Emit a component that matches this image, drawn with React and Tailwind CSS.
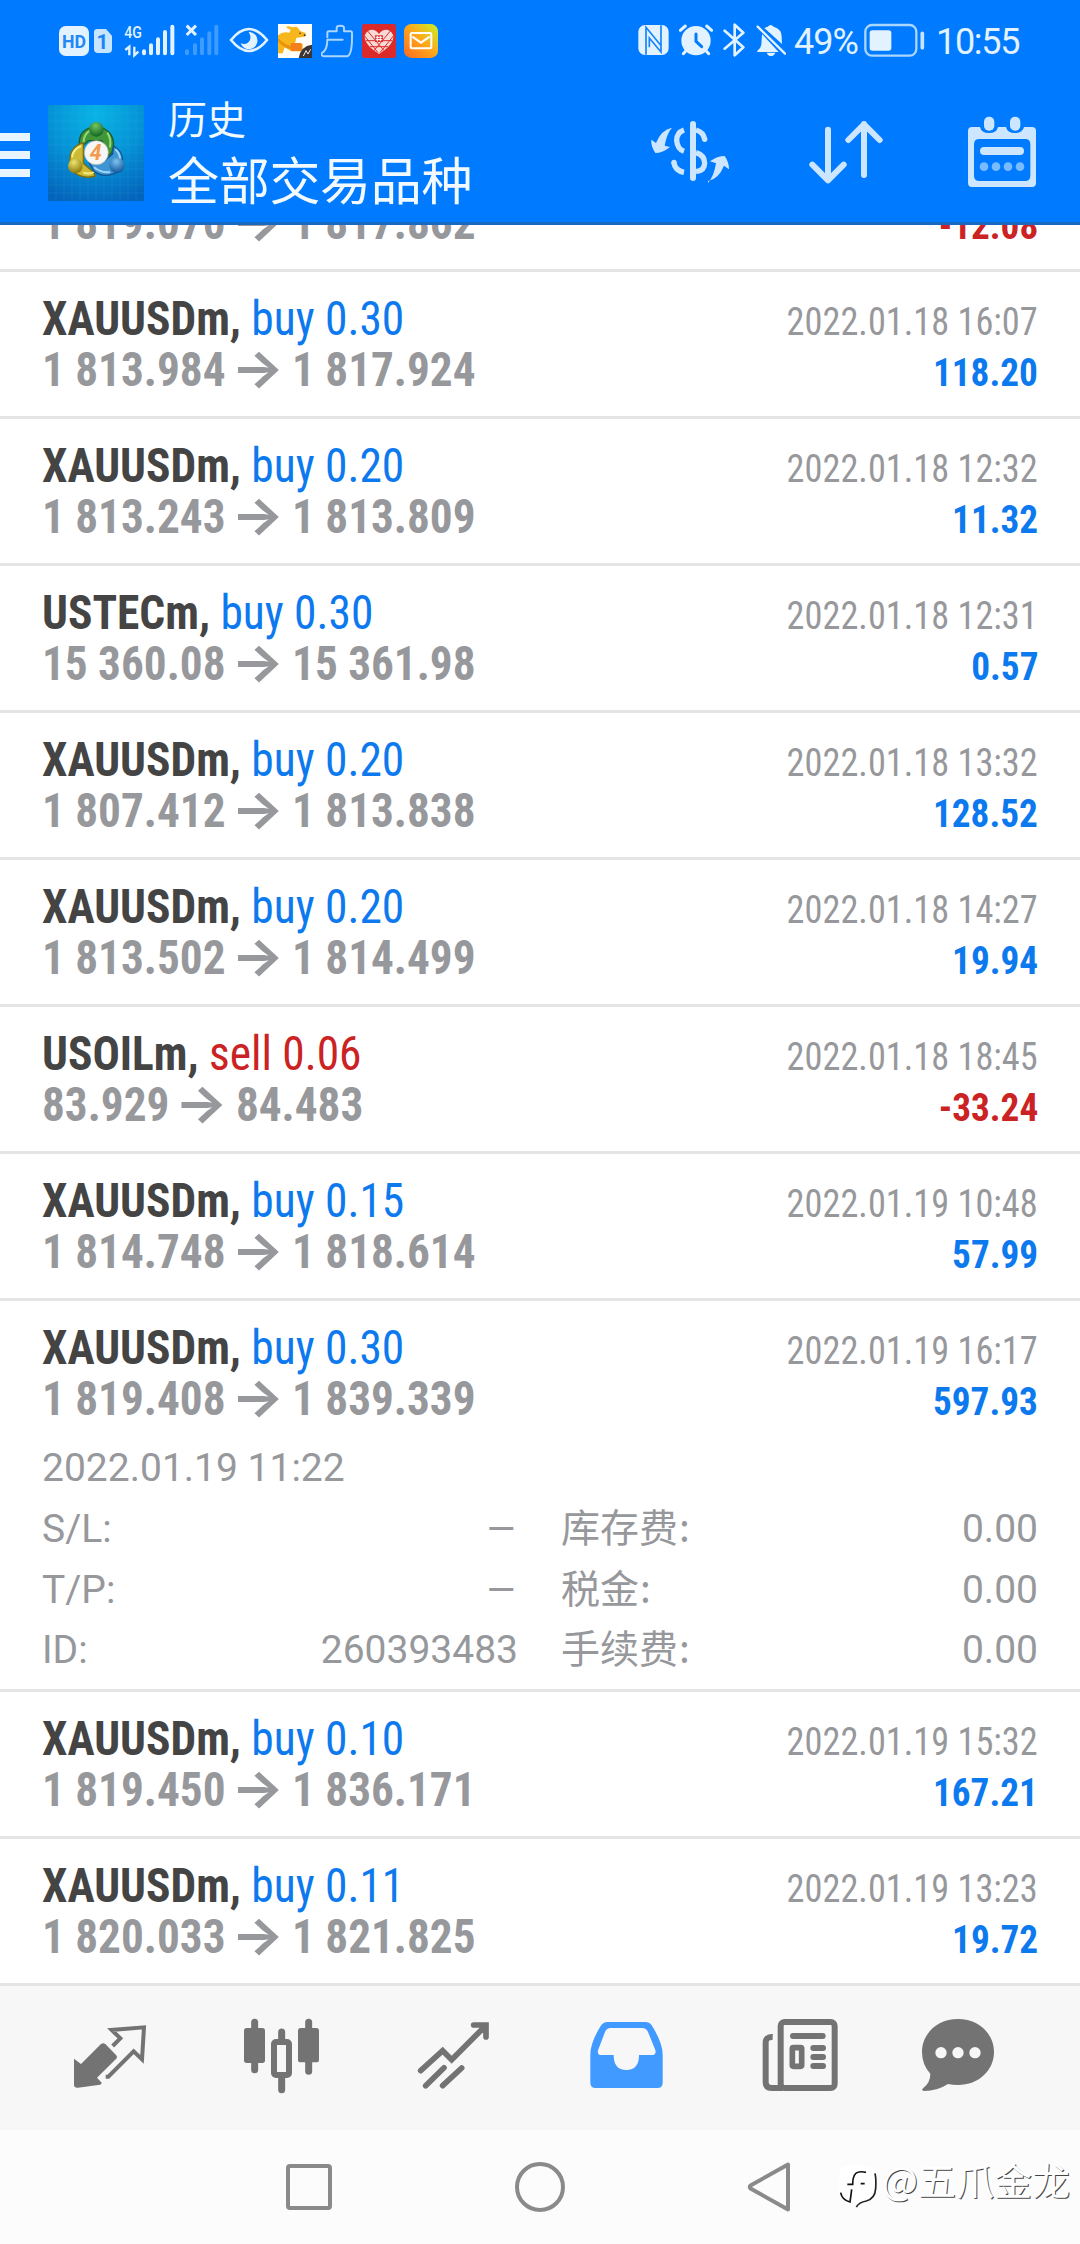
/* ===========================
   DATA
=========================== */

const deals = [
  { symbol: "XAUUSDm", side: "buy", lots: "0.30", open: "1 813.984", close: "1 817.924", time: "2022.01.18 16:07", profit: "118.20" },
  { symbol: "XAUUSDm", side: "buy", lots: "0.20", open: "1 813.243", close: "1 813.809", time: "2022.01.18 12:32", profit: "11.32" },
  { symbol: "USTECm", side: "buy", lots: "0.30", open: "15 360.08", close: "15 361.98", time: "2022.01.18 12:31", profit: "0.57" },
  { symbol: "XAUUSDm", side: "buy", lots: "0.20", open: "1 807.412", close: "1 813.838", time: "2022.01.18 13:32", profit: "128.52" },
  { symbol: "XAUUSDm", side: "buy", lots: "0.20", open: "1 813.502", close: "1 814.499", time: "2022.01.18 14:27", profit: "19.94" },
  { symbol: "USOILm", side: "sell", lots: "0.06", open: "83.929", close: "84.483", time: "2022.01.18 18:45", profit: "-33.24" },
  { symbol: "XAUUSDm", side: "buy", lots: "0.15", open: "1 814.748", close: "1 818.614", time: "2022.01.19 10:48", profit: "57.99" },
  {
    symbol: "XAUUSDm", side: "buy", lots: "0.30", open: "1 819.408", close: "1 839.339", time: "2022.01.19 16:17", profit: "597.93",
    details: {
      opened: "2022.01.19 11:22",
      rows: [
        ["S/L:", "–", "库存费", "0.00"],
        ["T/P:", "–", "税金", "0.00"],
        ["ID:", "260393483", "手续费", "0.00"]
      ]
    }
  },
  { symbol: "XAUUSDm", side: "buy", lots: "0.10", open: "1 819.450", close: "1 836.171", time: "2022.01.19 15:32", profit: "167.21" },
  { symbol: "XAUUSDm", side: "buy", lots: "0.11", open: "1 820.033", close: "1 821.825", time: "2022.01.19 13:23", profit: "19.72" }
];

/* ===========================
   STATUS BAR
=========================== */

function StatusBar() {

  return (

    <div className="flex h-[80px] items-start pt-[22px] pl-[59px] text-[#e2f2ff]">

      {/* HD + SIM badge */}

      <svg className="h-[36px] w-[30px]" viewBox="57 36 90 108">
        <rect x="57" y="48" width="90" height="90" rx="20" fill="#e2f2ff" />
        <text x="102" y="114" textAnchor="middle" textLength="72" lengthAdjust="spacingAndGlyphs" fontSize="56" fontWeight="700" fontFamily="Roboto" fill="#2387f5">HD</text>
      </svg>

      <svg className="ml-[5px] h-[36px] w-[18px]" viewBox="162 36 54 108">
        <path d="M172 57h26l18 20v40q0 12-12 12h-30q-12 0-12-12V67q0-10 10-10z" fill="#c8e5ff" />
        <text x="187" y="117" textAnchor="middle" fontSize="62" fontWeight="700" fontFamily="Roboto" fill="#1c84f5">1</text>
      </svg>

      {/* 4G signal */}

      <svg className="ml-[12px] h-[36px] w-[51px]" viewBox="252 36 153 108">
        <text x="253" y="84" textLength="53" lengthAdjust="spacingAndGlyphs" fontSize="52" fontWeight="500" fontFamily="Roboto" fill="#e2f2ff">4G</text>
        <path d="M256 120l12-10v26M283 110v26l12-11" stroke="#e2f2ff" strokeWidth="7" fill="none" />
        <path d="M312 124v6M333 106v24M354 88v42M375 66v64M397 50v80" stroke="#e2f2ff" strokeWidth="12" strokeLinecap="round" />
      </svg>

      {/* No signal on second SIM */}

      <svg className="ml-[10px] h-[36px] w-[34px]" viewBox="435 36 102 108">
        <path d="M441 124v6M465 106v24M486 88v42M508 70v60M529 50v80" stroke="#3f9cff" strokeWidth="12" strokeLinecap="round" />
        <path d="M440 47l28 28M468 47l-28 28" stroke="#e2f2ff" strokeWidth="9" />
      </svg>

      {/* Eye comfort */}

      <svg className="ml-[10px] h-[36px] w-[40px]" viewBox="567 36 120 108">
        <path d="M573 90Q627 24 681 90Q627 156 573 90z" fill="none" stroke="#e2f2ff" strokeWidth="8" strokeLinejoin="round" />
        <path d="M630 66a26 26 0 1 1-28 34q20 6 28-10q4-12-4-23z" fill="#e2f2ff" />
      </svg>

      {/* Kangaroo app */}

      <svg className="ml-[9px] h-[36px] w-[34px]" viewBox="714 36 102 108">
        <rect x="714" y="42" width="102" height="102" fill="#fffdf5" />
        <path d="M714 76q14-12 34-8l4-8-14-8q6-6 18 0l14-2 12 14 14 4q4 8-4 12l-24 4q0 14-6 18h26v22h-34l-20-12-6 18h-14z" fill="#f7b61c" />
        <path d="M714 84q20 22 46 26l-2 8q-28-2-44-24z" fill="#e9920a" />
        <rect x="752" y="99" width="33" height="24" rx="3" fill="#f2801d" />
        <circle cx="780" cy="70" r="2.5" fill="#433" />
        <circle cx="794" cy="76" r="3" fill="#433" />
        <path d="M776 144q6-36 40-40v40z" fill="#3c3536" />
        <path d="M790 138l8-16 6 10 8-14" stroke="#eee" strokeWidth="3" fill="none" />
      </svg>

      {/* Cleaner */}

      <svg className="ml-[9px] h-[36px] w-[33px]" viewBox="843 36 99 108">
        <path d="M862 82V68q0-4 4-4h24V53q0-6 11-6t11 6v11h21q3 0 3 5v14q0 50-14 56h-70q-10-2-6-10 16-10 16-40h46" fill="none" stroke="#a9d5ff" strokeWidth="6" strokeLinejoin="round" strokeLinecap="round" />
      </svg>

      {/* Heart app */}

      <svg className="ml-[8px] h-[36px] w-[34px]" viewBox="966 36 102 108">
        <rect x="966" y="42" width="102" height="102" rx="8" fill="#dc2a2b" />
        <path d="M1017 72q-14-18-32-10-14 10-10 26 6 22 42 44 36-22 42-44 4-16-10-26-18-8-32 10z" fill="#f8d9d4" />
        <path d="M982 62l50 60M974 78l40 50M1052 62l-50 60M1060 78l-40 50M978 92h28M1028 92h28M990 110h54" stroke="#dc2a2b" strokeWidth="3" />
        <rect x="1005" y="76" width="24" height="20" fill="#dc2a2b" />
        <path d="M1012 78v16M1021 78v16M1007 82h20M1007 89h20" stroke="#fff" strokeWidth="3" />
      </svg>

      {/* Mail app */}

      <svg className="ml-[8px] h-[36px] w-[34px]" viewBox="1092 36 102 108">
        <defs>
          <linearGradient id="mail" x1="0" y1="1" x2="1" y2="0">
            <stop offset="0" stopColor="#ff6a1f" />
            <stop offset="0.5" stopColor="#ffa51a" />
            <stop offset="1" stopColor="#c6f228" />
          </linearGradient>
        </defs>
        <rect x="1092" y="42" width="102" height="102" rx="22" fill="url(#mail)" />
        <rect x="1112" y="69" width="62" height="46" rx="4" fill="none" stroke="#fff" strokeWidth="6" />
        <path d="M1117 80l26 18 26-18" fill="none" stroke="#fff" strokeWidth="6" />
      </svg>

      {/* NFC */}

      <svg className="ml-[200px] h-[36px] w-[31px]" viewBox="54 36 93 108">
        <rect x="55" y="45" width="91" height="90" rx="20" fill="#e2f2ff" />
        <path d="M78 134V52l44 54M123 46v80L88 84v28" fill="none" stroke="#1583fb" strokeWidth="5" />
      </svg>

      {/* Alarm */}

      <svg className="ml-[10px] h-[36px] w-[34px]" viewBox="177 36 102 108">
        <circle cx="228" cy="92" r="44" fill="#e2f2ff" />
        <path d="M181 61l15-13M275 61l-15-13M198 122l-8 9M258 122l8 9" stroke="#e2f2ff" strokeWidth="9" strokeLinecap="round" />
        <path d="M228 72v22l17 16" fill="none" stroke="#007aff" strokeWidth="9" strokeLinecap="round" />
      </svg>

      {/* Bluetooth */}

      <svg className="ml-[10px] h-[36px] w-[22px]" viewBox="309 36 66 108">
        <path d="M314 62l56 50-26 24V44l26 24-56 48" fill="none" stroke="#e2f2ff" strokeWidth="8" strokeLinejoin="round" strokeLinecap="round" />
      </svg>

      {/* Muted bell */}

      <svg className="ml-[11px] h-[36px] w-[30px]" viewBox="408 36 90 108">
        <path d="M412 122q10-6 12-18l2-32 50 54h-64zM433 54l10-4q9-10 18 0 26 8 24 34l1 18zM440 128h26q-4 10-13 10t-13-10z" fill="#e2f2ff" />
        <path d="M413 50l82 81" stroke="#e2f2ff" strokeWidth="7" strokeLinecap="round" />
      </svg>

      <span className="ml-[8px] w-[69px] font-[Roboto] text-[36px] leading-[40px] tracking-[-1px] whitespace-nowrap">49%</span>

      {/* Battery */}

      <svg className="ml-[1px] h-[36px] w-[61px]" viewBox="732 36 183 108">
        <rect x="736" y="45" width="153" height="92" rx="20" fill="none" stroke="#a9d5ff" strokeWidth="7" />
        <rect x="749" y="61" width="65" height="61" rx="8" fill="#e2f2ff" />
        <path d="M907 70v43" stroke="#c8e5ff" strokeWidth="11" strokeLinecap="round" />
      </svg>

      <span className="ml-[11px] font-[Roboto] text-[36px] leading-[40px] tracking-[-1.3px] whitespace-nowrap">10:55</span>

    </div>

  );

}

/* ===========================
   HEADER
=========================== */

function AppLogo() {

  return (

    <svg className="ml-[18px] h-[96px] w-[96px]" viewBox="144 75 288 288">
      <defs>
        <radialGradient id="sky" cx="0.5" cy="0.1" r="0.95">
          <stop offset="0" stopColor="#08b4e6" />
          <stop offset="0.5" stopColor="#0593d6" />
          <stop offset="1" stopColor="#0464bb" />
        </radialGradient>
        <radialGradient id="green" cx="0.45" cy="0.25" r="0.8">
          <stop offset="0" stopColor="#6fc460" />
          <stop offset="1" stopColor="#0d5f20" />
        </radialGradient>
        <radialGradient id="gold" cx="0.4" cy="0.25" r="0.8">
          <stop offset="0" stopColor="#efe36c" />
          <stop offset="1" stopColor="#857208" />
        </radialGradient>
        <radialGradient id="blue" cx="0.45" cy="0.25" r="0.8">
          <stop offset="0" stopColor="#7cc2f0" />
          <stop offset="1" stopColor="#0a4f94" />
        </radialGradient>
      </defs>
      <rect x="144" y="75" width="288" height="288" fill="url(#sky)" />
      <path d="M168 75v288M192 75v288M216 75v288M240 75v288M264 75v288M288 75v288M312 75v288M336 75v288M360 75v288M384 75v288M408 75v288M144 99h288M144 123h288M144 147h288M144 171h288M144 195h288M144 219h288M144 243h288M144 267h288M144 291h288M144 315h288M144 339h288" stroke="#5fc4ee" strokeOpacity="0.18" strokeWidth="2" />
      <path d="M238 196q-4-50 50-56 54 6 53 60-4 20-14 26l-22-44h-40l-10 10z" fill="#3f973a" stroke="#1b5f27" strokeWidth="4" />
      <path d="M250 188q2-26 20-36M322 158q12 18 8 44" stroke="#98d77c" strokeWidth="6" fill="none" />
      <path d="M250 188q-44 14-40 58l16 34q30 18 60 8l-6-12-30-26z" fill="#cdbb33" stroke="#7c6e12" strokeWidth="4" />
      <path d="M216 232q2-24 28-34M250 278q18 6 32-2" stroke="#f5ec88" strokeWidth="6" fill="none" />
      <path d="M340 198q30 14 28 50l-14 26q-38 24-72 0l-14-26 44-4 26-22z" fill="#3d95d4" stroke="#0f538f" strokeWidth="4" />
      <path d="M346 208q14 12 14 30M282 262q22 18 48 14" stroke="#a0d7f7" strokeWidth="6" fill="none" />
      <circle cx="289" cy="148" r="22" fill="url(#green)" />
      <circle cx="226" cy="258" r="22" fill="url(#gold)" />
      <circle cx="351" cy="256" r="23" fill="url(#blue)" />
      <circle cx="289" cy="218" r="36" fill="#f6f6f6" stroke="#b9b9a6" strokeWidth="2" />
      <text x="287" y="241" textAnchor="middle" fontSize="64" fontWeight="700" fontStyle="italic" fontFamily="Roboto" fill="#f49a4e">4</text>
    </svg>

  );

}

function Header() {

  return (

    <div className="flex h-[145px] items-start border-b-[3px] border-[#1a69c0]">

      {/* Menu */}

      <div className="mt-[53px] flex w-[30px] flex-col gap-[10px]">
        <div className="h-[8px] bg-[#e6f5ff]"></div>
        <div className="h-[8px] bg-[#e6f5ff]"></div>
        <div className="h-[8px] bg-[#e6f5ff]"></div>
      </div>

      <div className="mt-[25px]">
        <AppLogo />
      </div>

      {/* Title */}

      <div className="ml-[24px] w-[483px] font-['Noto_Sans_CJK_SC',sans-serif] whitespace-nowrap text-[#f2faff]">
        <p className="mt-[13px] text-[39px] leading-[48px]">历史</p>
        <p className="mt-[4px] text-[51px] leading-[66px] tracking-[-0.3px]">全部交易品种</p>
      </div>

      {/* Currency */}

      <svg className="mt-[36px] h-[70px] w-[78px]" viewBox="93 78 234 210">
        <g fill="#cce6ff">
          <path d="M156 113q-32 6-48 46l-14-10q-2 20 12 40 22 0 44-18l-16-4q6-36 22-54z" />
          <path d="M264 273q32-6 48-46l15 11q0-22-13-40-22 0-44 16l18 6q-6 38-24 59z" />
        </g>
        <path d="M192 120q-22 8-22 31 2 26 22 33M161 216q4 26 31 31M228 120q22 6 26 28M228 188q26 8 26 31t-26 26" fill="none" stroke="#cce6ff" strokeWidth="16" />
        <circle cx="254" cy="148" r="8" fill="#cce6ff" />
        <circle cx="162" cy="217" r="8" fill="#cce6ff" />
        <path d="M219 102v162" stroke="#cce6ff" strokeWidth="18" strokeLinecap="round" />
      </svg>

      {/* Sort */}

      <svg className="ml-[80px] mt-[36px] h-[70px] w-[74px]" viewBox="567 78 222 210">
        <path d="M624 119v152M577 224l47 47 47-47M732 255V102M685 150l47-47 47 47" fill="none" stroke="#cce6ff" strokeWidth="18" strokeLinecap="round" strokeLinejoin="round" />
      </svg>

      {/* Calendar */}

      <svg className="ml-[84px] mt-[36px] h-[72px] w-[70px]" viewBox="1041 78 210 216">
        <path fillRule="evenodd" d="M1056 111h24q4 18 27 18t27-18h24q4 18 27 18t27-18h24q12 0 12 12v156q0 12-12 12h-180q-12 0-12-12V123q0-12 12-12zM1078 147q-16 0-16 16v94q0 16 16 16h137q16 0 16-16v-94q0-16-16-16z" fill="#cce6ff" />
        <rect x="1092" y="80" width="31" height="42" rx="15" fill="#cce6ff" />
        <rect x="1170" y="80" width="31" height="42" rx="15" fill="#cce6ff" />
        <path d="M1092 183h108" stroke="#cce6ff" strokeWidth="24" strokeLinecap="round" />
        <g fill="#7abaff">
          <circle cx="1092" cy="230" r="13" />
          <circle cx="1128" cy="230" r="13" />
          <circle cx="1164" cy="230" r="13" />
          <circle cx="1200" cy="230" r="13" />
        </g>
      </svg>

    </div>

  );

}

/* ===========================
   DEAL LIST
=========================== */

function PriceLine({ open, close, profit }) {

  const profitColor = profit.startsWith("-") ? "text-[#cb2224]" : "text-[#0d79ee]";

  return (

    <div className="flex h-[51px] items-baseline justify-between font-['Roboto_Condensed','Roboto'] leading-[51px] font-bold [font-stretch:75%]">
      <p className="flex origin-left scale-x-[0.942] items-baseline text-[48px] text-[#97989c]">
        <span>{open}</span>
        <span className="relative top-[1px] mr-[12px] ml-[9px] scale-x-[1.14] font-[Inter] text-[52px] leading-[40px] font-bold">→</span>
        <span>{close}</span>
      </p>
      <p className={`origin-right scale-x-[0.955] text-[39px] ${profitColor}`}>{profit}</p>
    </div>

  );

}

function DealDetails({ details }) {

  return (

    <div className="-mt-[7px] h-[251px] font-[Roboto] text-[39px] leading-[60.7px] text-[#97989c]">

      <p className="h-[57px]">{details.opened}</p>

      {details.rows.map(([label, value, feeLabel, fee]) => (

        <div key={label} className="flex h-[60.7px] items-baseline">
          <div className="flex w-[476px] justify-between">
            <span>{label}</span>
            <span className={value === "–" ? "origin-right scale-x-125" : ""}>{value}</span>
          </div>
          <div className="ml-[43px] flex flex-1 items-baseline justify-between">
            <span className="font-['Noto_Sans_CJK_SC',sans-serif]">{feeLabel}<span className="ml-[1px]">:</span></span>
            <span>{fee}</span>
          </div>
        </div>

      ))}

    </div>

  );

}

function Deal({ deal }) {

  const lotsColor = deal.side === "buy" ? "text-[#0d79ee]" : "text-[#cb2224]";

  return (

    <div className="border-b-[3px] border-[#e4e4e4] px-[42px]">

      <div className="h-[144px] pt-[21px]">

        <div className="flex h-[51px] items-baseline justify-between font-['Roboto_Condensed','Roboto'] leading-[51px] [font-stretch:75%]">
          <p className="origin-left scale-x-[0.946] text-[48px]">
            <span className="font-bold text-[#444444]">{deal.symbol},</span>{" "}
            <span className={lotsColor}>{deal.side} {deal.lots}</span>
          </p>
          <p className="origin-right scale-x-[0.931] text-[39px] text-[#97989c]">{deal.time}</p>
        </div>

        <PriceLine open={deal.open} close={deal.close} profit={deal.profit} />

      </div>

      {deal.details && <DealDetails details={deal.details} />}

    </div>

  );

}

/* ===========================
   BOTTOM TABS
=========================== */

function Tabs() {

  return (

    <div className="flex h-[144px] bg-[#f7f7f7] px-[24px]">

      {/* Quotes */}

      <svg className="h-[144px] w-[172px]" viewBox="-48 48 516 432">
        <path d="M102 266l21 16 60-60q7-5 13 0l32 33q6 6 0 12l-57 56 14 15q0 5-5 6l-66 9q-12 1-12-9z" fill="#737373" />
        <path d="M218 228l23-23-26-25 97-8-6 96-25-24-76 76h-8" fill="none" stroke="#737373" strokeWidth="12" />
      </svg>

      {/* Charts */}

      <svg className="h-[144px] w-[172px]" viewBox="468 48 516 432">
        <path d="M644 157v142M806 157v147M725 186v30M725 318v41" stroke="#737373" strokeWidth="21" strokeLinecap="round" />
        <rect x="612" y="174" width="63" height="105" rx="8" fill="#737373" />
        <rect x="774" y="174" width="63" height="103" rx="8" fill="#737373" />
        <rect x="702" y="216" width="45" height="99" rx="6" fill="#f7f7f7" stroke="#737373" strokeWidth="18" />
      </svg>

      {/* Trade */}

      <svg className="h-[144px] w-[172px]" viewBox="984 48 516 432">
        <path d="M1142 302l66-60 27 27 103-103M1301 165h37v36M1157 347l55-54M1208 347l57-53" fill="none" stroke="#737373" strokeWidth="17" strokeLinecap="round" />
      </svg>

      {/* History, active */}

      <svg className="h-[144px] w-[172px]" viewBox="-60 48 516 432">
        <path fillRule="evenodd" d="M142 156h114q12 0 19 10 33 52 33 88v84q0 16-16 16H107q-16 0-16-16v-84q0-36 31-86 8-12 20-12zM152 174q-12 0-17 12l-21 55q-3 14 10 14h37q0 45 38 45t38-45h38q15 0 11-15l-22-54q-5-12-18-12z" fill="#419aff" />
      </svg>

      {/* News */}

      <svg className="h-[144px] w-[172px]" viewBox="456 48 516 432">
        <rect x="662" y="156" width="162" height="198" rx="12" fill="none" stroke="#737373" strokeWidth="18" />
        <path d="M638 201q-21-1-21 17v118q0 18 18 18h34" fill="none" stroke="#737373" strokeWidth="18" />
        <path d="M699 198h89M760 234h29M760 261h29M760 288h29" stroke="#737373" strokeWidth="18" strokeLinecap="round" />
        <rect x="697" y="233" width="28" height="56" rx="3" fill="none" stroke="#737373" strokeWidth="17" />
      </svg>

      {/* Messages */}

      <svg className="h-[144px] w-[172px]" viewBox="972 48 516 432">
        <path d="M1194 147c62 0 108 44 108 99s-46 99-108 99q-16 0-30-3-32 21-72 21-10-2-2-9 21-16 21-43-25-27-25-65c0-55 46-99 108-99z" fill="#737373" />
        <circle cx="1143" cy="248" r="17" fill="#f7f7f7" />
        <circle cx="1194" cy="248" r="17" fill="#f7f7f7" />
        <circle cx="1245" cy="248" r="17" fill="#f7f7f7" />
      </svg>

    </div>

  );

}

/* ===========================
   SYSTEM NAVIGATION
=========================== */

function SystemNav() {

  return (

    <div className="flex h-[114px] items-start bg-[#fcfcfc]">

      <div className="mt-[34px] ml-[286px] h-[46px] w-[46px] rounded-[4px] border-[4px] border-[#8a8a8a]"></div>

      <div className="mt-[32px] ml-[183px] h-[50px] w-[50px] rounded-full border-[4px] border-[#8a8a8a]"></div>

      <svg className="mt-[31px] ml-[181px] h-[52px] w-[46px]" viewBox="0 0 46 52">
        <path d="M42 3.500v45L4.500 27.500q-1.500-1.500 0-3z" fill="none" stroke="#8a8a8a" strokeWidth="4" strokeLinejoin="round" />
      </svg>

      {/* Author mark */}

      <svg className="mt-[33px] ml-[46px] h-[46px] w-[40px]" viewBox="24 69 120 138">
        <path d="M54 78h58q26 0 26 28v44q0 28-28 34-20 2-30 20v-14l-20-6q-32-4-32-34v-44q0-28 26-28z" fill="#fff" />
        <path d="M32 158q4 22 28 28 3-20 5-38M52 133h16q0-34 18-37 10-2 22 1M92 131h12" fill="none" stroke="#111" strokeWidth="5" />
        <path d="M135 100q4 18 2 46-2 30-28 37-22 4-30 18" fill="none" stroke="#222" strokeWidth="5" />
      </svg>

      <span className="mt-[19px] ml-[4px] font-['Noto_Sans_CJK_SC',sans-serif] text-[38px] leading-[60px] whitespace-nowrap text-white [text-shadow:1px_1px_0_#444]">@五爪金龙</span>

    </div>

  );

}

function App() {

  return (

    <div className="flex h-[2244px] w-[1080px] flex-col overflow-hidden bg-white">

      <div className="relative z-10 shrink-0 bg-[#007aff]">
        <StatusBar />
        <Header />
      </div>

      {/* The list is scrolled: only the lower part of the first row shows */}

      <div className="h-[1761px] shrink-0 overflow-hidden">

        <div className="-mt-[28px] h-[75px] border-b-[3px] border-[#e4e4e4] px-[42px]">
          <PriceLine open="1 819.070" close="1 817.862" profit="-12.08" />
        </div>

        {deals.map((deal) => (
          <Deal key={deal.open} deal={deal} />
        ))}

      </div>

      <Tabs />
      <SystemNav />

    </div>

  );

}

export default App;
